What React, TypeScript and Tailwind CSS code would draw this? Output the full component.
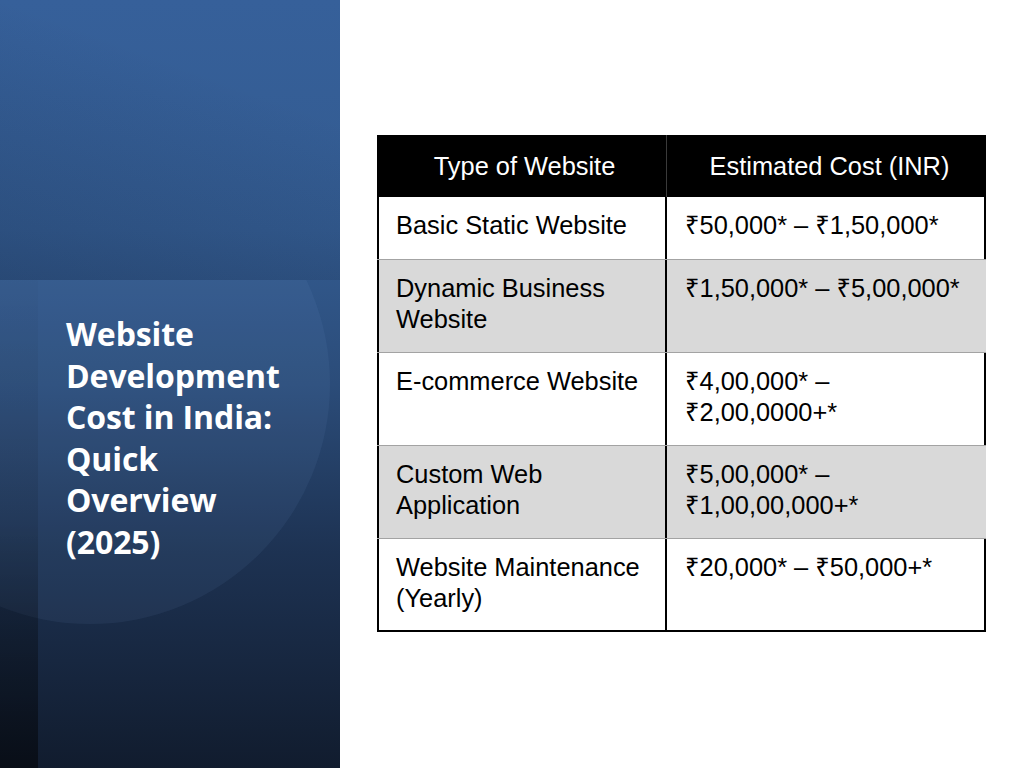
import React from "react";

type Row = { a: string[]; b: string[]; gray: boolean; h: string };

const rows: Row[] = [
  { a: ["Basic Static Website"], b: ["₹50,000* – ₹1,50,000*"], gray: false, h: "h-[63px]" },
  { a: ["Dynamic Business", "Website"], b: ["₹1,50,000* – ₹5,00,000*"], gray: true, h: "h-[93px]" },
  { a: ["E-commerce Website"], b: ["₹4,00,000* –", "₹2,00,0000+*"], gray: false, h: "h-[93px]" },
  { a: ["Custom Web", "Application"], b: ["₹5,00,000* –", "₹1,00,00,000+*"], gray: true, h: "h-[93px]" },
  { a: ["Website Maintenance", "(Yearly)"], b: ["₹20,000* – ₹50,000+*"], gray: false, h: "h-[93px]" },
];

export default function App() {
  return (
    <div className="flex w-[1024px] h-[768px] overflow-hidden bg-white">
      {/* Left panel */}
      <div className="relative w-[340px] h-full shrink-0 overflow-hidden bg-[linear-gradient(180deg,#36609a_0%,#335b90_30%,#2b4c79_50%,#1d3252_72%,#111c2e_100%)]">
        {/* top band darkening */}
        <div className="absolute left-0 top-0 w-full h-[280px] bg-[linear-gradient(200deg,rgba(0,0,0,0)_30%,rgba(10,20,40,0.2)_100%)]" />
        {/* lower band with faint circle */}
        <div className="absolute left-0 top-[280px] w-full h-[488px] overflow-hidden">
          <div className="absolute left-[-150px] top-[-136px] w-[480px] h-[480px] rounded-full bg-[rgba(130,170,230,0.075)]" />
        </div>
        {/* left dark strip */}
        <div className="absolute left-0 top-[280px] w-[38px] h-[488px] bg-[linear-gradient(180deg,rgba(0,0,0,0.02)_0%,rgba(0,0,0,0.1)_50%,rgba(0,0,0,0.5)_100%)]" />
        <div className="relative pt-[313px] pl-[66px] text-white font-bold text-[32px] leading-[41.6px] [font-family:'Open_Sans','Noto_Sans',sans-serif] tracking-[-0.1px]">
          <div>Website</div>
          <div>Development</div>
          <div>Cost in India:</div>
          <div>Quick</div>
          <div>Overview</div>
          <div>(2025)</div>
        </div>
      </div>

      {/* Right area */}
      <div className="flex-1 pt-[135px] pl-[37px] [font-family:'Liberation_Sans','Noto_Sans',sans-serif] text-[25.4px] leading-[31px] text-black">
        <div className="w-[609px] flex flex-col">
          {/* header */}
          <div className="flex h-[62px] bg-black text-white">
            <div className="w-[290px] flex items-center justify-center border-r border-[#3a3a3a] pl-[6px]">
              Type of Website
            </div>
            <div className="flex-1 flex items-center justify-center pl-[6px]">
              Estimated Cost (INR)
            </div>
          </div>
          {rows.map((r, i) => {
            const last = i === rows.length - 1;
            return (
              <div
                key={i}
                className={`flex ${r.h} ${r.gray ? "bg-[#d9d9d9]" : "bg-white"} ${
                  last ? "border-b-2 border-black" : "border-b border-[#a3a3a3]"
                }`}
              >
                <div className="w-[290px] shrink-0 border-l-2 border-r-2 border-black pl-[17px] pt-[13px]">
                  {r.a.map((t, j) => (
                    <div key={j}>{t}</div>
                  ))}
                </div>
                <div
                  className={`flex-1 pl-[18px] pt-[13px] ${
                    r.gray ? "" : "border-r-2 border-black"
                  }`}
                >
                  {r.b.map((t, j) => (
                    <div key={j}>{t}</div>
                  ))}
                </div>
              </div>
            );
          })}
        </div>
      </div>
    </div>
  );
}
